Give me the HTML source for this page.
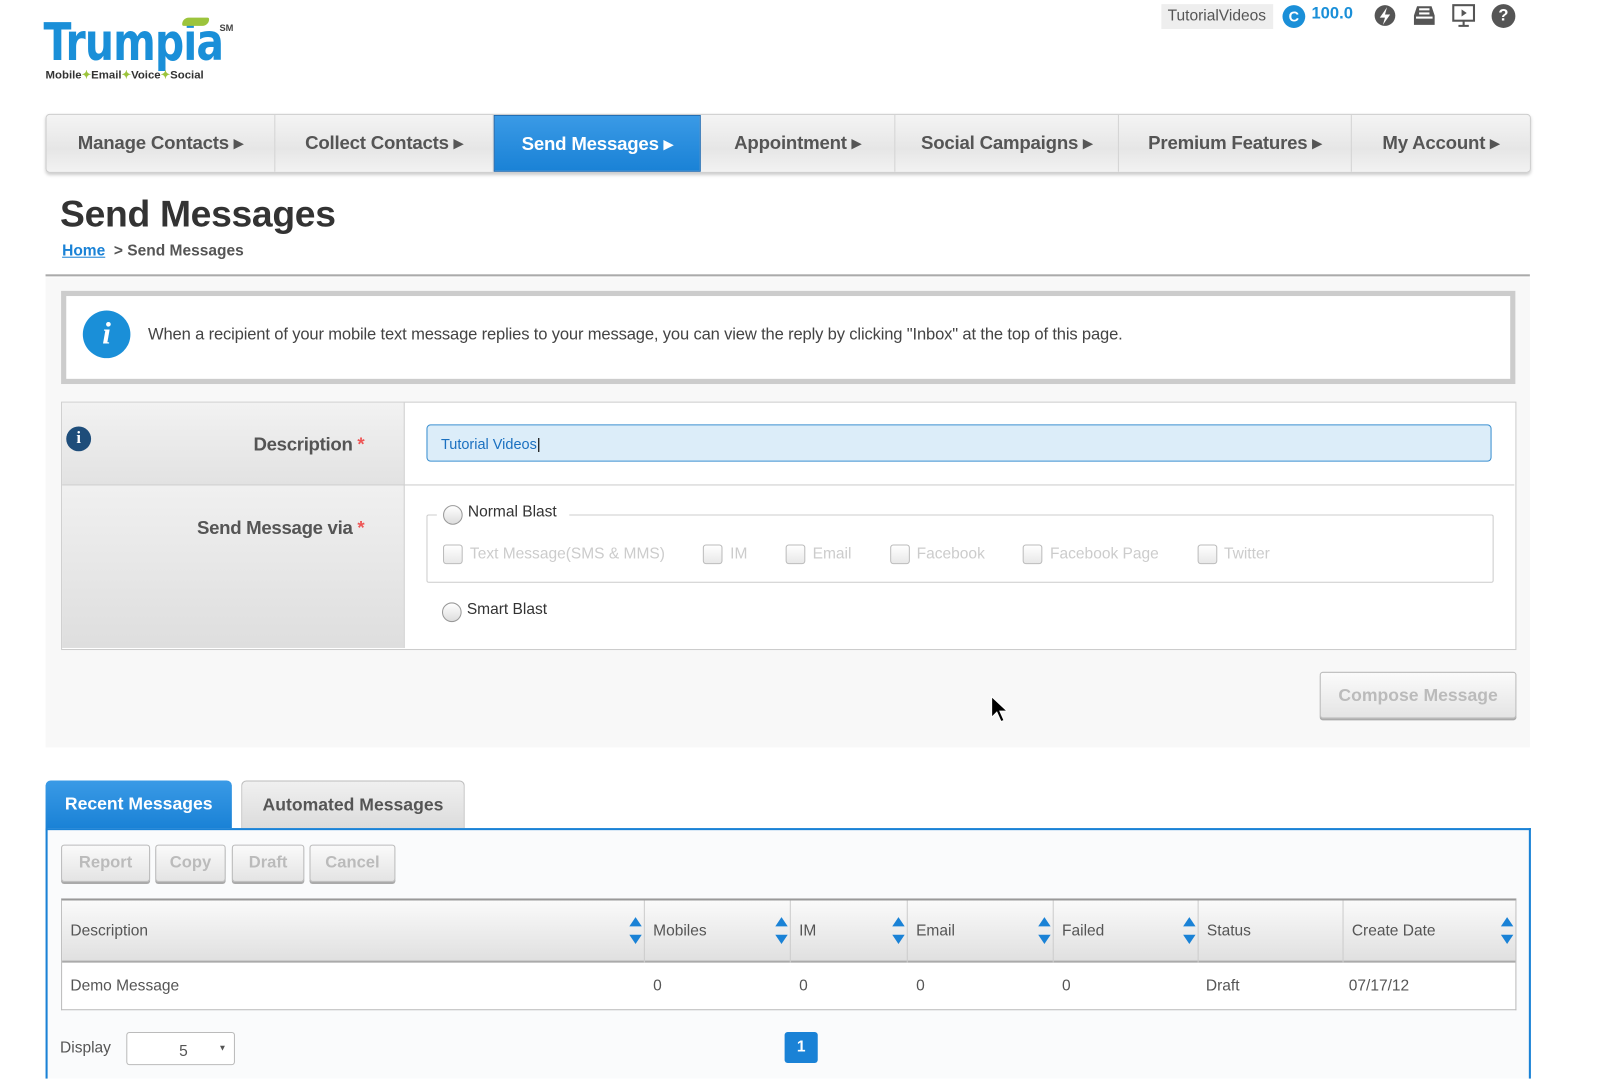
<!DOCTYPE html>
<html><head><meta charset="utf-8"><style>
html,body{margin:0;padding:0;background:#fff;overflow:hidden;width:1623px;height:1059px}
#w{position:absolute;left:0;top:0;width:1568px;height:1023px;transform:scale(1.0351);transform-origin:0 0;font-family:"Liberation Sans",sans-serif;}
.a{position:absolute}
.nav{left:44px;top:110px;width:1433px;height:55px;border:1px solid #ccc;border-radius:4px;background:linear-gradient(#f4f4f4,#e6e6e6 60%,#f2f2f2);box-shadow:0 2px 3px #ccc;overflow:hidden}
.ni{position:absolute;top:0;height:55px;line-height:55px;text-align:center;font-weight:bold;font-size:18px;color:#555;border-right:1px solid #d4d4d4;box-sizing:border-box;letter-spacing:-0.2px}
.ni.act{background:linear-gradient(#3a9ae6,#1a82d6);color:#fff;border:1px solid #1565b0}
.lab{font-weight:bold;font-size:18px;color:#555;text-align:right;letter-spacing:-0.3px}
.cb{display:inline-block;width:17px;height:17px;border:1px solid #bbb;border-radius:3px;background:linear-gradient(#fff,#e8e8e8);vertical-align:middle;margin-right:7px}
.gap{display:inline-block;width:37px}
.rad{position:absolute;width:17px;height:17px;border:1px solid #999;border-radius:50%;background:linear-gradient(#fff,#ddd)}
.btn{position:absolute;top:816px;height:34px;line-height:34px;border:1px solid #bbb;border-radius:3px;background:linear-gradient(#fafafa,#e4e4e4);color:#bbb;font-weight:bold;font-size:16px;text-align:center;box-shadow:0 2px 0 #aaa}
.th{position:absolute;top:0;height:60px;line-height:60px;font-size:15px;color:#555;border-right:1px solid #ccc;box-sizing:border-box;padding-left:8px}
.td{position:absolute;top:60px;height:45px;line-height:45px;font-size:15px;color:#555;padding-left:8px}
.sort{position:absolute;right:8px;top:16px;width:0;height:0}
.sort:before{content:"";position:absolute;left:-6px;top:0;border:6px solid transparent;border-bottom:9px solid #1a82d6;border-top:0}
.sort:after{content:"";position:absolute;left:-6px;top:17px;border:6px solid transparent;border-top:9px solid #1a82d6;border-bottom:0}
</style></head><body><div id="w">
<div class="a" style="left:42px;top:12px;font-size:50px;font-weight:bold;color:#1a8fd8;letter-spacing:-1px;transform:scaleX(0.88);transform-origin:0 0;font-family:'DejaVu Sans Condensed','Liberation Sans',sans-serif">Trumpia</div>
<div class="a" style="left:176px;top:17px;width:26px;height:8px;background:#9cc43c;border-radius:8px 2px 8px 2px"></div>
<div class="a" style="left:212px;top:22px;font-size:9px;font-weight:bold;color:#444">SM</div>
<div class="a" style="left:44px;top:66px;font-size:11px;font-weight:bold;color:#333">Mobile<span style="color:#9cc43c">✦</span>Email<span style="color:#9cc43c">✦</span>Voice<span style="color:#9cc43c">✦</span>Social</div>
<div class="a" style="left:1122px;top:4px;width:108px;height:24px;background:#eee;font-size:15px;color:#555;line-height:24px;padding-left:6px;box-sizing:border-box">TutorialVideos</div>
<div class="a" style="left:1239px;top:5px;width:22px;height:22px;border-radius:50%;background:#1a8fd8;color:#fff;font-weight:bold;font-size:14px;text-align:center;line-height:22px">C</div>
<div class="a" style="left:1267px;top:5px;font-size:16px;font-weight:bold;color:#1a8fd8">100.0</div>
<svg class="a" style="left:1326px;top:3px" width="24" height="24" viewBox="0 0 24 24"><path d="M12 2a10 10 0 1 0 0 20 10 10 0 0 0 0-20z" fill="#555"/><path d="M14 4l-7 10h5l-2 7 7-10h-5z" fill="#fff"/></svg>
<svg class="a" style="left:1364px;top:3px" width="24" height="24" viewBox="0 0 24 24"><path d="M5 3h14l3 9v9H2v-9z" fill="#555"/><rect x="7" y="5" width="10" height="2" fill="#fff"/><rect x="7" y="9" width="10" height="2" fill="#fff"/><rect x="4" y="13" width="16" height="2" fill="#fff"/></svg>
<svg class="a" style="left:1402px;top:3px" width="24" height="24" viewBox="0 0 24 24"><rect x="2" y="2" width="20" height="15" fill="none" stroke="#555" stroke-width="2"/><path d="M10 6v7l5-3.5z" fill="#555"/><path d="M12 17v4M7 22h10" stroke="#555" stroke-width="2"/></svg>
<div class="a" style="left:1441px;top:4px;width:23px;height:23px;border-radius:50%;background:#555;color:#fff;font-weight:bold;font-size:16px;text-align:center;line-height:23px">?</div>
<div class="a nav">
<div class="ni" style="left:0;width:221px">Manage Contacts ▸</div>
<div class="ni" style="left:221px;width:211px">Collect Contacts ▸</div>
<div class="ni act" style="left:432px;width:200px">Send Messages ▸</div>
<div class="ni" style="left:632px;width:188px">Appointment ▸</div>
<div class="ni" style="left:820px;width:216px">Social Campaigns ▸</div>
<div class="ni" style="left:1036px;width:225px">Premium Features ▸</div>
<div class="ni" style="left:1261px;width:172px;border-right:0">My Account ▸</div>
</div>
<div class="a" style="left:58px;top:186px;font-size:36px;font-weight:bold;color:#333;letter-spacing:-0.3px">Send Messages</div>
<div class="a" style="left:60px;top:234px;font-size:15px;font-weight:bold;color:#555"><span style="color:#1a82d6;text-decoration:underline">Home</span> &nbsp;&gt; Send Messages</div>
<div class="a" style="left:44px;top:265px;width:1434px;height:2px;background:#aaa"></div>
<div class="a" style="left:44px;top:268px;width:1434px;height:454px;background:#f8f8f8"></div>
<div class="a" style="left:59px;top:281px;width:1395px;height:80px;border:5px solid #ccc;background:#fff"></div>
<div class="a" style="left:80px;top:300px;width:46px;height:46px;border-radius:50%;background:#1a8fd8;color:#fff;font:italic bold 30px 'Liberation Serif',serif;text-align:center;line-height:46px">i</div>
<div class="a" style="left:143px;top:315px;font-size:16px;color:#444;letter-spacing:-0.15px">When a recipient of your mobile text message replies to your message, you can view the reply by clicking "Inbox" at the top of this page.</div>
<div class="a" style="left:59px;top:388px;width:1404px;height:238px;border:1px solid #ccc;background:#fff"></div>
<div class="a" style="left:60px;top:389px;width:330px;height:79px;background:linear-gradient(#f2f2f2,#e2e2e2);border-bottom:1px solid #ccc;border-right:1px solid #ccc"></div>
<div class="a" style="left:60px;top:469px;width:330px;height:157px;background:linear-gradient(#f0f0f0,#dedede);border-right:1px solid #ccc"></div>
<div class="a" style="left:391px;top:468px;width:1072px;height:1px;background:#ccc"></div>
<div class="a" style="left:64px;top:412px;width:24px;height:24px;border-radius:50%;background:#1e4d7a;color:#fff;font:bold 16px 'Liberation Serif',serif;text-align:center;line-height:24px">i</div>
<div class="a lab" style="left:100px;top:419px;width:252px">Description <span style="color:#e55">*</span></div>
<div class="a lab" style="left:100px;top:500px;width:252px">Send Message via <span style="color:#e55">*</span></div>
<div class="a" style="left:412px;top:410px;width:1029px;height:36px;border:1px solid #3a8fd0;border-radius:4px;background:#dcedf9;box-sizing:border-box;padding-left:13px;line-height:36px;font-size:14px;color:#1a70c0">Tutorial Videos<span style="color:#000">|</span></div>
<div class="a" style="left:412px;top:497px;width:1029px;height:64px;border:1px solid #ccc;border-radius:2px"></div>
<div class="a" style="left:422px;top:485px;width:128px;height:22px;background:#fff"></div>
<div class="rad" style="left:428px;top:488px"></div>
<div class="a" style="left:452px;top:486px;font-size:15px;color:#333">Normal Blast</div>
<div class="a" style="left:428px;top:526px;font-size:15px;color:#ccc;white-space:nowrap">
<span class="cb"></span>Text Message(SMS &amp; MMS)<span class="gap"></span><span class="cb"></span>IM<span class="gap"></span><span class="cb"></span>Email<span class="gap"></span><span class="cb"></span>Facebook<span class="gap"></span><span class="cb"></span>Facebook Page<span class="gap"></span><span class="cb"></span>Twitter</div>
<div class="rad" style="left:427px;top:582px"></div>
<div class="a" style="left:451px;top:580px;font-size:15px;color:#333">Smart Blast</div>
<div class="a" style="left:1275px;top:649px;width:188px;height:43px;border:1px solid #bbb;border-radius:3px;background:linear-gradient(#fbfbfb,#e4e4e4);box-shadow:0 2px 0 #aaa;color:#bbb;font-weight:bold;font-size:17px;text-align:center;line-height:43px">Compose Message</div>
<svg class="a" style="left:957px;top:672px" width="18" height="26" viewBox="0 0 18 26"><path d="M1 1v20l5-5 4 9 3-1-4-9h7z" fill="#000" stroke="#fff" stroke-width="1"/></svg>
<div class="a" style="left:44px;top:754px;width:180px;height:46px;border-radius:5px 5px 0 0;background:linear-gradient(#3a9ae6,#1a82d6);color:#fff;font-weight:bold;font-size:17px;text-align:center;line-height:46px">Recent Messages</div>
<div class="a" style="left:233px;top:754px;width:214px;height:45px;border:1px solid #bbb;border-bottom:0;border-radius:5px 5px 0 0;background:linear-gradient(#f0f0f0,#dcdcdc);color:#555;font-weight:bold;font-size:17px;text-align:center;line-height:46px">Automated Messages</div>
<div class="a" style="left:44px;top:800px;width:1431px;height:240px;border:2px solid #1a82d6;border-bottom:0;background:#fafbfc"></div>
<div class="btn" style="left:59px;width:84px">Report</div>
<div class="btn" style="left:150px;width:66px">Copy</div>
<div class="btn" style="left:224px;width:68px">Draft</div>
<div class="btn" style="left:299px;width:81px">Cancel</div>
<div class="a" style="left:59px;top:868px;width:1404px;height:105px;border:1px solid #bbb;border-top:2px solid #999;background:#fff">
<div class="a" style="left:0;top:0;width:1404px;height:60px;background:linear-gradient(#fafafa,#e0e0e0);border-bottom:2px solid #aaa;box-sizing:border-box"></div>
<div class="th" style="left:0;width:563px">Description<span class="sort"></span></div>
<div class="th" style="left:563px;width:141px">Mobiles<span class="sort"></span></div>
<div class="th" style="left:704px;width:113px">IM<span class="sort"></span></div>
<div class="th" style="left:817px;width:141px">Email<span class="sort"></span></div>
<div class="th" style="left:958px;width:140px">Failed<span class="sort"></span></div>
<div class="th" style="left:1098px;width:140px">Status</div>
<div class="th" style="left:1238px;width:166px;border-right:0">Create Date<span class="sort"></span></div>
<div class="td" style="left:0">Demo Message</div>
<div class="td" style="left:563px">0</div>
<div class="td" style="left:704px">0</div>
<div class="td" style="left:817px">0</div>
<div class="td" style="left:958px">0</div>
<div class="td" style="left:1097px">Draft</div>
<div class="td" style="left:1235px">07/17/12</div>
</div>
<div class="a" style="left:58px;top:1004px;font-size:15px;color:#555">Display</div>
<div class="a" style="left:122px;top:997px;width:103px;height:30px;border:1px solid #bbb;border-radius:3px;background:#fff;font-size:15px;color:#555"><span style="position:absolute;left:50px;top:9px">5</span><span style="position:absolute;left:88px;top:10px;font-size:8px">▼</span></div>
<div class="a" style="left:758px;top:997px;width:32px;height:30px;border-radius:3px;background:#1a82d6;color:#fff;font-weight:bold;font-size:15px;text-align:center;line-height:30px">1</div>
</div></body></html>
